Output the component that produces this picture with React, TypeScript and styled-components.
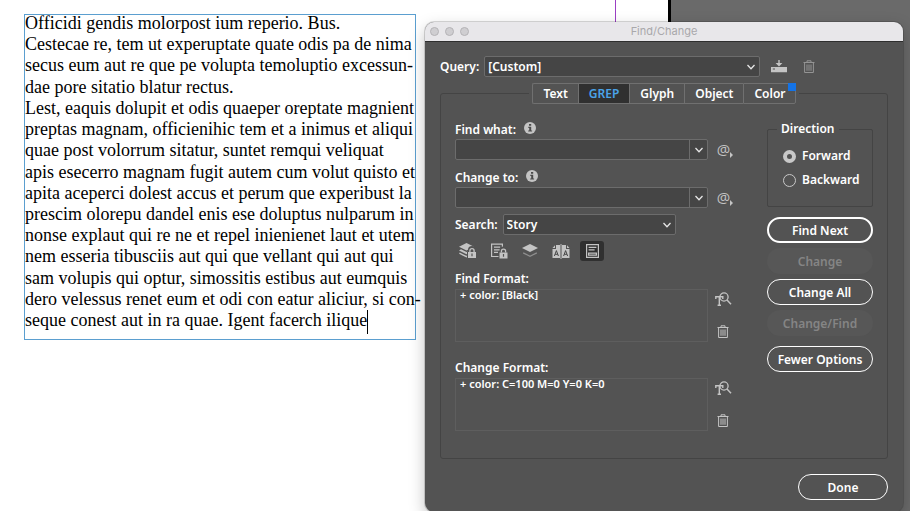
import React, { useState } from "react";
import styled, { createGlobalStyle, css } from "styled-components";

const Global = createGlobalStyle`
  * { box-sizing: border-box; }
  body {
    margin: 0;
    background: #fff;
    font-family: "Noto Sans", "Open Sans", sans-serif;
    overflow: hidden;
  }
  button, input, select { font: inherit; color: inherit; margin: 0; }
`;

const Desktop = styled.div`
  position: relative;
  display: flex;
  height: 100vh;
  overflow: hidden;
`;

const Page = styled.main`
  position: relative;
  flex: 1;
  background: #fff;
  border-right: 3px solid #000;
  padding: 14px 0 0 24px;
`;

const Guide = styled.div`
  position: absolute;
  top: 0;
  bottom: 0;
  right: 52px;
  width: 1px;
  background: #9b3fc4;
`;

const Pasteboard = styled.div`
  width: 239px;
  background: #6a6a6a;
`;

const TextFrame = styled.article`
  display: flex;
  flex-direction: column;
  justify-content: space-between;
  width: 392px;
  height: 326px;
  padding-bottom: 9px;
  border: 1px solid #5b9fd0;
  font-family: "Liberation Serif", "Times New Roman", serif;
  font-size: 18px;
  line-height: 16px;
  color: #000;
`;

const Line = styled.div`
  white-space: nowrap;
`;

const Caret = styled.span`
  display: inline-block;
  width: 1px;
  height: 24px;
  margin: -4px 0;
  vertical-align: middle;
  background: #000;
`;

const Dialog = styled.section`
  position: absolute;
  top: 22px;
  left: 425px;
  right: 7px;
  border-radius: 9px;
  background: #535353;
  color: #fff;
  font-size: 12px;
  font-weight: 600;
  line-height: 16px;
  box-shadow: 0 0 0 1px rgba(0, 0, 0, 0.15), 0 6px 16px rgba(0, 0, 0, 0.25);
`;

const TitleBar = styled.header`
  display: grid;
  grid-template-columns: 1fr auto 1fr;
  align-items: center;
  height: 20px;
  padding: 0 5px 1px;
  border-bottom: 1px solid #2e2e2e;
  border-radius: 9px 9px 0 0;
  background: #e8e7ea;
`;

const Lights = styled.div`
  display: flex;
  gap: 6px;
`;

const Light = styled.button`
  width: 9px;
  height: 9px;
  padding: 0;
  border: 1px solid #b4b3b6;
  border-radius: 50%;
  background: #cfced1;
`;

const Title = styled.h1`
  margin: 0;
  font: 400 11px/16px Inter, "Liberation Sans", sans-serif;
  color: #a9a8ab;
`;

const Body = styled.div`
  display: flex;
  flex-direction: column;
  padding: 14px 15px 12px;
`;

const QueryRow = styled.div`
  display: flex;
  align-items: center;
  gap: 5px;
  padding-right: 69px;
  > label { padding-top: 1px; }
`;

const SelectBox = styled.div<{ $width?: number }>`
  display: grid;
  align-items: center;
  ${(p) => (p.$width ? css`width: ${p.$width}px;` : css`flex: 1;`)}
  > * { grid-area: 1 / 1; }
  > svg { justify-self: end; margin-right: 4px; pointer-events: none; }
`;

const Select = styled.select`
  appearance: none;
  width: 100%;
  height: 21px;
  padding: 1px 20px 0 3px;
  border: 1px solid #6c6c6c;
  border-radius: 2px;
  background: #454545;
`;

const Tools = styled.div`
  display: flex;
  align-items: center;
  gap: 10px;
  margin-left: 4px;
`;

const IconButton = styled.button<{ $active?: boolean }>`
  display: flex;
  align-items: center;
  justify-content: center;
  width: 20px;
  height: 20px;
  padding: 0;
  border: 0;
  border-radius: 3px;
  background: ${(p) => (p.$active ? "#303030" : "transparent")};
  color: #c4c4c4;
  &:disabled { color: #949494; }
`;

const Group = styled.div`
  margin-top: 16px;
  border: 1px solid #444;
  border-radius: 3px;
`;

const TabBar = styled.div`
  display: flex;
  justify-content: center;
  margin-top: -11px;
`;

const Tabs = styled.div`
  position: relative;
  display: flex;
  padding: 0 3px;
  background: #535353;
`;

const Tab = styled.button<{ $active: boolean }>`
  height: 21px;
  padding: 1px 10px 0;
  border: 1px solid #707070;
  border-right-width: 0;
  background: ${(p) => (p.$active ? "#303030" : "#535353")};
  color: ${(p) => (p.$active ? "#4aa3e8" : "#fff")};
  &:first-child { border-radius: 2px 0 0 2px; }
  &:last-of-type { padding-right: 9px; border-right-width: 1px; border-radius: 0 2px 2px 0; }
`;

const Badge = styled.span`
  position: absolute;
  top: 0;
  right: 3px;
  width: 8px;
  height: 8px;
  background: #1473e6;
`;

const Columns = styled.div`
  display: flex;
  justify-content: space-between;
  padding: 17px 14px 9px;
`;

const Main = styled.div`
  display: flex;
  flex-direction: column;
  width: 280px;
  padding-top: 1px;
`;

const LabelRow = styled.div`
  display: flex;
  align-items: center;
  gap: 8px;
  height: 16px;
  margin-bottom: 1px;
  > svg { margin-bottom: 4px; }
`;

const FieldRow = styled.div`
  display: flex;
  align-items: center;
  gap: 7px;
  margin-bottom: 10px;
`;

const Combo = styled.div`
  display: flex;
  flex: 1;
  height: 21px;
  border: 1px solid #6c6c6c;
  border-radius: 2px;
  background: #454545;
`;

const ComboInput = styled.input`
  flex: 1;
  min-width: 0;
  padding: 0 4px;
  border: 0;
  background: transparent;
`;

const ComboButton = styled.button`
  display: flex;
  align-items: center;
  justify-content: center;
  width: 18px;
  padding: 0;
  border: 0;
  border-left: 1px solid #6c6c6c;
  background: transparent;
`;

const SearchRow = styled.div`
  display: flex;
  align-items: center;
  gap: 5px;
  margin-top: -4px;
  > label { padding-top: 1px; }
`;

const Filters = styled.div`
  display: flex;
  gap: 7px;
  margin: 6px 0 10px 1px;
  ${IconButton} { width: 24px; }
`;

const FormatRow = styled.div`
  display: flex;
  gap: 5px;
  margin-bottom: 18px;
  padding-right: 2px;
`;

const FormatBox = styled.output`
  flex: 1;
  height: 53px;
  padding: 0 4px;
  border: 1px solid #5e5e5e;
  font-size: 11px;
  line-height: 10px;
`;

const FormatTools = styled.div`
  display: flex;
  flex-direction: column;
  gap: 13px;
`;

const FormatLabel = styled.div`
  height: 18px;
`;

const Side = styled.div`
  display: flex;
  flex-direction: column;
  gap: 5px;
  width: 106px;
`;

const Direction = styled.fieldset`
  min-width: 0;
  height: 86px;
  margin: 0 0 5px;
  padding: 7px 0 7px 15px;
  border: 1px solid #444;
  border-radius: 2px;
`;

const Legend = styled.legend`
  margin-left: -6px;
  padding: 0 4px;
`;

const RadioLabel = styled.label`
  display: flex;
  align-items: center;
  gap: 6px;
  height: 24px;
`;

const Radio = styled.input`
  appearance: none;
  width: 13px;
  height: 13px;
  border: 1px solid #c8c8c8;
  border-radius: 50%;
  &:checked { border: 4px solid #c8c8c8; }
`;

const Pill = styled.button<{ $strong?: boolean; $apart?: boolean }>`
  height: 26px;
  padding: 1px 0 0;
  margin-top: ${(p) => (p.$apart ? 5 : 0)}px;
  border: ${(p) => (p.$strong ? 2 : 1)}px solid #fff;
  border-radius: 13px;
  background: transparent;
  &:disabled { border-color: transparent; background: #575757; color: #858585; }
`;

const Footer = styled.footer`
  display: flex;
  justify-content: flex-end;
  margin-top: 15px;
  ${Pill} { width: 90px; }
`;

const Chevron = () => (
  <svg width="10" height="8" viewBox="0 0 10 8" fill="none" stroke="#e6e6e6" strokeWidth="1.3">
    <path d="M1.5 2 5 5.7 8.5 2" />
  </svg>
);

const InfoIcon = () => (
  <svg width="12" height="12" viewBox="0 0 12 12">
    <circle cx="6" cy="6" r="6" fill="#c4c4c4" />
    <path d="M5 2h2.2v1.8H5zM4.3 4.8h2.9v3.6h.9v1.2H4.2V8.4h1V6h-.9z" fill="#4a4a4a" />
  </svg>
);

const SaveIcon = () => (
  <svg width="16" height="13" viewBox="0 0 16 13" fill="currentColor">
    <path d="M7.3 0h1.4v3h2.7L8 6.4 4.6 3h2.7z" />
    <path fillRule="evenodd" d="M0 7h16v5.2H0zM1.8 8.6v1h2.2v-1z" />
  </svg>
);

const TrashIcon = () => (
  <svg width="12" height="14" viewBox="0 0 12 14" fill="none" stroke="currentColor">
    <path d="M.5 2.5h11M4 2.2V.8h4v1.4M1.6 2.8v9.7h8.8V2.8M4 4.5v6.3M6 4.5v6.3M8 4.5v6.3" />
  </svg>
);

const AtMark = styled.span`
  font: 400 15px/16px "Open Sans", sans-serif;
`;

const AtIcon = () => (
  <>
    <AtMark>@</AtMark>
    <svg width="3" height="6" viewBox="0 0 3 6">
      <path d="M0 0 3 3 0 6z" fill="currentColor" />
    </svg>
  </>
);

const AtButton = styled(IconButton)`
  > span { margin-bottom: 2px; }
  > svg { align-self: flex-end; margin-bottom: 2px; }
`;

const Lock = ({ x, y }: { x: number; y: number }) => (
  <g transform={`translate(${x} ${y})`}>
    <path d="M-1 3.2H0V2a4 4 0 0 1 8 0v1.2h1V11H-1z" fill="#535353" />
    <path d="M1.9 4V2.8a2.1 2.1 0 0 1 4.2 0V4" fill="none" stroke="currentColor" strokeWidth="1.3" />
    <path fillRule="evenodd" d="M0 4h8v6H0zM3.4 5.6v2.6h1.2V5.6z" fill="currentColor" />
  </g>
);

const LockedLayersIcon = () => (
  <svg width="18" height="16" viewBox="0 0 18 16">
    <path d="M7.5 0 15 3.7 7.5 7.5 0 3.7z" fill="currentColor" />
    <path d="M0 7.4 2 6.2l5.5 2.7L13 6.2l2 1.2-7.5 3.8z" fill="currentColor" />
    <path d="M.4 10.2l7.1 3.5 3-1.6" fill="none" stroke="currentColor" strokeWidth="1.4" />
    <Lock x={9} y={5} />
  </svg>
);

const LockedStoriesIcon = () => (
  <svg width="17" height="16" viewBox="0 0 17 16">
    <path d="M.6 1.1h10.8v12.4H.6zM3 4.2h6.2M3 6.8h6.2M3 9.4h4" fill="none" stroke="currentColor" strokeWidth="1.2" />
    <Lock x={8.5} y={5.5} />
  </svg>
);

const LayersIcon = () => (
  <svg width="16" height="14" viewBox="0 0 16 14">
    <path d="M8 0l8 4-8 4-8-4z" fill="currentColor" />
    <path d="M1.2 8.8 8 12.3l6.8-3.5" fill="none" stroke="#8e8e8e" strokeWidth="1.3" />
  </svg>
);

const MasterPagesIcon = () => (
  <svg width="18" height="15" viewBox="0 0 18 15">
    <path d="M4 1h4v13H.5V5H4zM14 1h-4v13h7.5V5H14z" fill="currentColor" />
    <path d="M.5 4 3 1.2V4zM17.5 4 15 1.2V4z" fill="currentColor" />
    <path d="M9 0v15" stroke="currentColor" strokeWidth="1" />
    <path d="M2.4 12 4.4 6.6 6.4 12M3.1 10.3h2.6M11.6 12l2-5.4 2 5.4M12.3 10.3h2.6" fill="none" stroke="#474747" strokeWidth="1" />
  </svg>
);

const FootnotesIcon = () => (
  <svg width="13" height="14" viewBox="0 0 13 14" fill="none" stroke="currentColor" strokeWidth="1.2">
    <path d="M.6.6h11.8v12.8H.6zM2.6 3.4h7.8M2.6 5.9h6M2.6 9.2h7.8v2H2.6z" />
  </svg>
);

const FindFormatIcon = () => (
  <svg width="17" height="14" viewBox="0 0 17 14" fill="none" stroke="currentColor">
    <circle cx="9" cy="5" r="4.1" strokeWidth="1.3" />
    <path d="M12 8l4 4.3" strokeWidth="1.5" />
    <path d="M.8 7V4.8h7V7M4.3 4.8v8.4M2.6 13.2H6" strokeWidth="1.4" />
  </svg>
);

const storyLines = [
  "Officidi gendis molorpost ium reperio. Bus.",
  "Cestecae re, tem ut experuptate quate odis pa de nima",
  "secus eum aut re que pe volupta temoluptio excessun-",
  "dae pore sitatio blatur rectus.",
  "Lest, eaquis dolupit et odis quaeper oreptate magnient",
  "preptas magnam, officienihic tem et a inimus et aliqui",
  "quae post volorrum sitatur, suntet remqui veliquat",
  "apis esecerro magnam fugit autem cum volut quisto et",
  "apita aceperci dolest accus et perum que experibust la",
  "prescim olorepu dandel enis ese doluptus nulparum in",
  "nonse explaut qui re ne et repel inienienet laut et utem",
  "nem esseria tibusciis aut qui que vellant qui aut qui",
  "sam volupis qui optur, simossitis estibus aut eumquis",
  "dero velessus renet eum et odi con eatur aliciur, si con-",
  "seque conest aut in ra quae. Igent facerch ilique",
];

const tabNames = ["Text", "GREP", "Glyph", "Object", "Color"];

const filters = [
  { label: "Include locked layers", Icon: LockedLayersIcon },
  { label: "Include locked stories", Icon: LockedStoriesIcon },
  { label: "Include hidden layers", Icon: LayersIcon },
  { label: "Include master pages", Icon: MasterPagesIcon },
  { label: "Include footnotes", Icon: FootnotesIcon },
];

function ComboField({ id, label }: { id: string; label: string }) {
  return (
    <>
      <LabelRow>
        <label htmlFor={id}>{label}</label>
        <InfoIcon />
      </LabelRow>
      <FieldRow>
        <Combo>
          <ComboInput id={id} type="text" />
          <ComboButton type="button" aria-label="Recent entries"><Chevron /></ComboButton>
        </Combo>
        <AtButton type="button" aria-label="Special characters"><AtIcon /></AtButton>
      </FieldRow>
    </>
  );
}

function FormatField({ label, value }: { label: string; value: string }) {
  return (
    <>
      <FormatLabel>{label}</FormatLabel>
      <FormatRow>
        <FormatBox aria-label={label}>{value}</FormatBox>
        <FormatTools>
          <IconButton type="button" aria-label="Specify attributes"><FindFormatIcon /></IconButton>
          <IconButton type="button" aria-label="Clear attributes"><TrashIcon /></IconButton>
        </FormatTools>
      </FormatRow>
    </>
  );
}

export default function App() {
  const [tab, setTab] = useState("GREP");
  const [active, setActive] = useState<string[]>(["Include footnotes"]);
  const toggle = (name: string) =>
    setActive((list) => (list.includes(name) ? list.filter((n) => n !== name) : [...list, name]));

  return (
    <Desktop>
      <Global />
      <Page>
        <Guide />
        <TextFrame>
          {storyLines.map((line, i) => (
            <Line key={line}>
              {line}
              {i === storyLines.length - 1 && <Caret />}
            </Line>
          ))}
        </TextFrame>
      </Page>
      <Pasteboard />
      <Dialog role="dialog" aria-label="Find/Change">
        <TitleBar>
          <Lights>
            <Light type="button" aria-label="Close" />
            <Light type="button" aria-label="Minimize" />
            <Light type="button" aria-label="Zoom" />
          </Lights>
          <Title>Find/Change</Title>
        </TitleBar>
        <Body>
          <QueryRow>
            <label htmlFor="query">Query:</label>
            <SelectBox>
              <Select id="query"><option>[Custom]</option></Select>
              <Chevron />
            </SelectBox>
            <Tools>
              <IconButton type="button" aria-label="Save query"><SaveIcon /></IconButton>
              <IconButton type="button" aria-label="Delete query" disabled><TrashIcon /></IconButton>
            </Tools>
          </QueryRow>
          <Group>
            <TabBar>
              <Tabs role="tablist">
                {tabNames.map((name) => (
                  <Tab key={name} type="button" role="tab" aria-selected={tab === name} $active={tab === name} onClick={() => setTab(name)}>
                    {name}
                  </Tab>
                ))}
                <Badge />
              </Tabs>
            </TabBar>
            <Columns>
              <Main>
                <ComboField id="find-what" label="Find what:" />
                <ComboField id="change-to" label="Change to:" />
                <SearchRow>
                  <label htmlFor="search">Search:</label>
                  <SelectBox $width={173}>
                    <Select id="search"><option>Story</option></Select>
                    <Chevron />
                  </SelectBox>
                </SearchRow>
                <Filters>
                  {filters.map(({ label, Icon }) => (
                    <IconButton key={label} type="button" aria-label={label} aria-pressed={active.includes(label)} $active={active.includes(label)} onClick={() => toggle(label)}>
                      <Icon />
                    </IconButton>
                  ))}
                </Filters>
                <FormatField label="Find Format:" value="+ color: [Black]" />
                <FormatField label="Change Format:" value="+ color: C=100 M=0 Y=0 K=0" />
              </Main>
              <Side>
                <Direction>
                  <Legend>Direction</Legend>
                  <RadioLabel><Radio type="radio" name="direction" defaultChecked />Forward</RadioLabel>
                  <RadioLabel><Radio type="radio" name="direction" />Backward</RadioLabel>
                </Direction>
                <Pill type="button" $strong>Find Next</Pill>
                <Pill type="button" disabled>Change</Pill>
                <Pill type="button">Change All</Pill>
                <Pill type="button" disabled>Change/Find</Pill>
                <Pill type="button" $apart>Fewer Options</Pill>
              </Side>
            </Columns>
          </Group>
          <Footer>
            <Pill type="button">Done</Pill>
          </Footer>
        </Body>
      </Dialog>
    </Desktop>
  );
}
